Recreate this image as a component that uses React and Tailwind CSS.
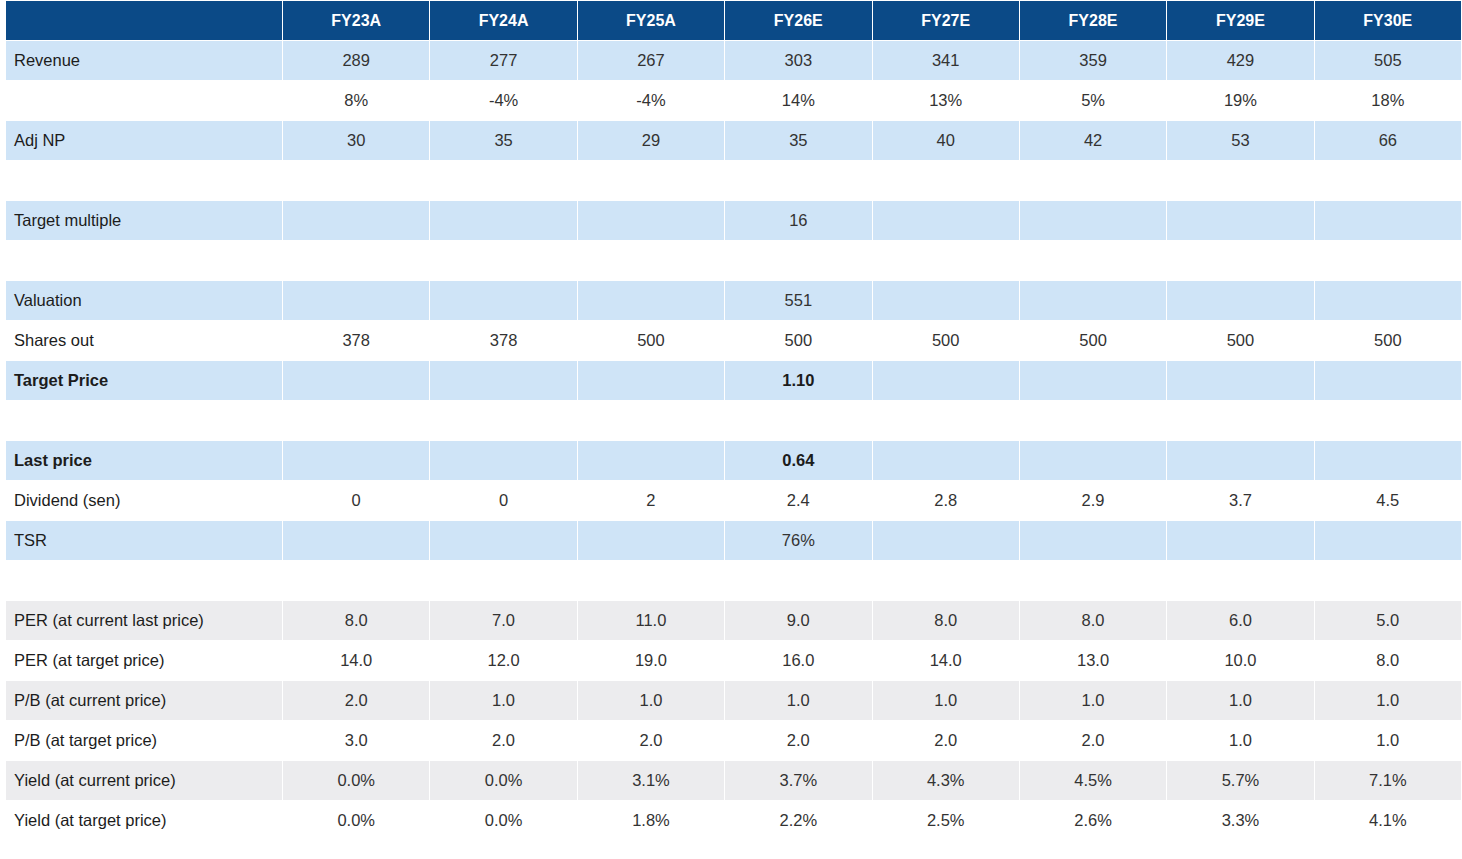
import React from 'react';

const years = ['FY23A', 'FY24A', 'FY25A', 'FY26E', 'FY27E', 'FY28E', 'FY29E', 'FY30E'];

// tone: blue | white | grey | blank
const rows = [
  { label: 'Revenue', tone: 'blue', vals: ['289', '277', '267', '303', '341', '359', '429', '505'] },
  { label: '', tone: 'white', vals: ['8%', '-4%', '-4%', '14%', '13%', '5%', '19%', '18%'] },
  { label: 'Adj NP', tone: 'blue', vals: ['30', '35', '29', '35', '40', '42', '53', '66'] },
  { tone: 'blank' },
  { label: 'Target multiple', tone: 'blue', vals: ['', '', '', '16', '', '', '', ''] },
  { tone: 'blank' },
  { label: 'Valuation', tone: 'blue', vals: ['', '', '', '551', '', '', '', ''] },
  { label: 'Shares out', tone: 'white', vals: ['378', '378', '500', '500', '500', '500', '500', '500'] },
  { label: 'Target Price', tone: 'blue', bold: true, vals: ['', '', '', '1.10', '', '', '', ''] },
  { tone: 'blank' },
  { label: 'Last price', tone: 'blue', bold: true, vals: ['', '', '', '0.64', '', '', '', ''] },
  { label: 'Dividend (sen)', tone: 'white', vals: ['0', '0', '2', '2.4', '2.8', '2.9', '3.7', '4.5'] },
  { label: 'TSR', tone: 'blue', vals: ['', '', '', '76%', '', '', '', ''] },
  { tone: 'blank' },
  { label: 'PER (at current last price)', tone: 'grey', vals: ['8.0', '7.0', '11.0', '9.0', '8.0', '8.0', '6.0', '5.0'] },
  { label: 'PER (at target price)', tone: 'white', vals: ['14.0', '12.0', '19.0', '16.0', '14.0', '13.0', '10.0', '8.0'] },
  { label: 'P/B (at current price)', tone: 'grey', vals: ['2.0', '1.0', '1.0', '1.0', '1.0', '1.0', '1.0', '1.0'] },
  { label: 'P/B (at target price)', tone: 'white', vals: ['3.0', '2.0', '2.0', '2.0', '2.0', '2.0', '1.0', '1.0'] },
  { label: 'Yield (at current price)', tone: 'grey', vals: ['0.0%', '0.0%', '3.1%', '3.7%', '4.3%', '4.5%', '5.7%', '7.1%'] },
  { label: 'Yield (at target price)', tone: 'white', vals: ['0.0%', '0.0%', '1.8%', '2.2%', '2.5%', '2.6%', '3.3%', '4.1%'] },
];

const toneBg = {
  blue: 'bg-[#cfe4f7]',
  grey: 'bg-[#ececee]',
  white: 'bg-white',
  blank: 'bg-white',
};

export default function App() {
  return (
    <div className="bg-white min-h-screen pl-[5px] text-[#1c1c1c] font-['Liberation_Sans',Arial,sans-serif]">
      <table className="table-fixed border-separate border-spacing-px w-[1457px]">
        <thead>
          <tr className="h-[39px]">
            <th className="w-[276px] bg-[#0b4a87]"></th>
            {years.map(y => (
              <th key={y} className="bg-[#0b4a87] text-white text-[16px] font-bold text-center">
                {y}
              </th>
            ))}
          </tr>
        </thead>
        <tbody>
          {rows.map((r, i) => (
            <tr key={i} className="h-[39px]">
              {r.tone === 'blank' ? (
                <td colSpan={9}></td>
              ) : (
                <>
                  <td className={`${toneBg[r.tone]} pl-2 text-[16.5px] ${r.bold ? 'font-bold' : ''}`}>
                    {r.label}
                  </td>
                  {r.vals.map((v, j) => (
                    <td key={j} className={`${toneBg[r.tone]} text-center text-[16.5px] ${r.bold ? 'font-bold' : 'text-[#333]'}`}>
                      {v}
                    </td>
                  ))}
                </>
              )}
            </tr>
          ))}
        </tbody>
      </table>
    </div>
  );
}
